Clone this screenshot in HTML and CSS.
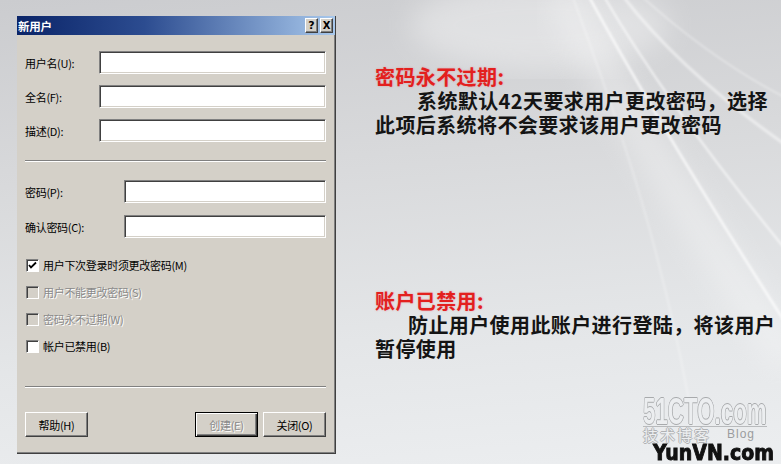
FILE: index.html
```html
<!DOCTYPE html>
<html lang="zh-CN">
<head>
    <meta charset="UTF-8">
    <title>新用户</title>
    <link rel="stylesheet" href="styles.css">
</head>
<body>

<div class="screen">
    <svg class="streaks" width="781" height="464" viewBox="0 0 781 464">
        <defs>
            <filter id="soft"><feGaussianBlur stdDeviation="1.2"/></filter>
            <filter id="wide"><feGaussianBlur stdDeviation="14"/></filter>
        </defs>
        <ellipse cx="540" cy="25" rx="130" ry="45" fill="#fff" opacity="0.35" filter="url(#wide)"/>
        <path d="M560,-5 C620,100 690,220 790,360" stroke="#fff" stroke-width="34" fill="none" opacity="0.3" filter="url(#wide)"/>
        <g fill="none" stroke="#fff" filter="url(#soft)">
            <path d="M588,-5 C640,90 700,190 790,330" stroke-width="2.5" opacity="0.75"/>
            <path d="M603,-5 C650,75 712,160 790,255" stroke-width="2" opacity="0.65"/>
            <path d="M622,-5 C668,55 728,105 790,148" stroke-width="3" opacity="0.5"/>
            <path d="M572,-5 C618,120 668,260 700,464" stroke-width="1.5" opacity="0.35"/>
            <path d="M640,-5 C690,40 740,75 790,100" stroke-width="1.5" opacity="0.4"/>
        </g>
    </svg>

    <div class="dialog">
        <div class="titlebar">
            <span class="title">新用户</span>
            <div class="tb-btns">
                <span class="tb-btn">?</span>
                <span class="tb-btn tb-close">X</span>
            </div>
        </div>

        <div class="dlg-body">
            <div class="fields names">
                <label>用户名(U):</label><span class="field"></span>
                <label>全名(F):</label><span class="field"></span>
                <label>描述(D):</label><span class="field"></span>
            </div>

            <div class="sep"></div>

            <div class="fields pass">
                <label>密码(P):</label><span class="field"></span>
                <label>确认密码(C):</label><span class="field"></span>
            </div>

            <div class="checks">
                <div class="check">
                    <span class="box">
                        <svg width="9" height="9" viewBox="0 0 9 9"><path d="M1,4 L3,6.5 L8,1.5" stroke="#000" stroke-width="1.8" fill="none"/></svg>
                    </span>
                    <span>用户下次登录时须更改密码(M)</span>
                </div>
                <div class="check disabled"><span class="box"></span><span>用户不能更改密码(S)</span></div>
                <div class="check disabled"><span class="box"></span><span>密码永不过期(W)</span></div>
                <div class="check"><span class="box"></span><span>帐户已禁用(B)</span></div>
            </div>

            <div class="sep sep-low"></div>

            <div class="buttons">
                <button class="btn">帮助(H)</button>
                <button class="btn btn-default push" disabled>创建(E)</button>
                <button class="btn">关闭(O)</button>
            </div>
        </div>
    </div>

    <div class="notes">
        <div class="note">
            <div class="note-title">密码永不过期:</div>
            <p class="indent-a">系统默认42天要求用户更改密码，选择<br>此项后系统将不会要求该用户更改密码</p>
        </div>
        <div class="note note-second">
            <div class="note-title">账户已禁用:</div>
            <p class="indent-b">防止用户使用此账户进行登陆，将该用户<br>暂停使用</p>
        </div>
    </div>

    <div class="watermark">
        <div class="wm-site">51CTO.com</div>
        <div class="wm-blog"><span class="wm-cn">技术博客</span><span class="wm-en">Blog</span></div>
        <div class="wm-yun">YunVN.com</div>
    </div>
</div>

</body>
</html>
```

FILE: styles.css
```css
body { margin: 0; font-family: "Noto Sans CJK SC", sans-serif; }
.screen { position: relative; width: 781px; height: 464px; overflow: hidden; display: flex; align-items: flex-start; background: linear-gradient(175deg, #cbcccf 0%, #d8d9db 35%, #e4e6e8 70%, #eceef0 100%); }
.streaks { position: absolute; top: 0; left: 0; }

/* dialog */
.dialog { position: relative; width: 319px; height: 438px; margin: 16px 0 0 17px; background: #d4d0c8; box-sizing: border-box; box-shadow: inset -1px -1px #404040, inset -2px -2px #808080; display: flex; flex-direction: column; }
.titlebar { height: 19px; display: flex; align-items: center; justify-content: space-between; background: linear-gradient(to right, #0a2468, #2c4c90 40%, #a8c8ec); margin-right: 1px; }
.title { color: #fff; font-weight: bold; font-size: 11.5px; letter-spacing: -0.3px; padding-left: 1px; }
.tb-btns { display: flex; gap: 2px; margin-right: 2px; }
.tb-btn { width: 11px; height: 13px; background: #d4d0c8; border: 1px solid; border-color: #fff #404040 #404040 #fff; box-shadow: inset -1px -1px #808080; font: bold 11px/13px "DejaVu Sans", sans-serif; text-align: center; color: #000; }
.tb-close { font-size: 10px; }

.dlg-body { padding: 16px 10px 15px 8px; font-size: 11px; letter-spacing: -0.3px; color: #000; }
.fields { display: grid; row-gap: 11px; align-items: center; }
.names { grid-template-columns: 74px 1fr; }
.pass { grid-template-columns: 99px 1fr; row-gap: 12px; }
.field { display: block; height: 23px; box-sizing: border-box; background: #fff; border: 1px solid; border-color: #808080 #fff #fff #808080; box-shadow: inset 1px 1px #404040, inset -1px -1px #d4d0c8; }

.sep { height: 0; border-top: 1px solid #808080; border-bottom: 1px solid #fff; margin: 18px 0; }
.sep-low { margin: 32px 0 24px; }

.checks { display: flex; flex-direction: column; gap: 11px; margin-top: 19px; }
.check { height: 16px; display: flex; align-items: center; gap: 4px; padding-left: 1px; }
.box { width: 11px; height: 11px; background: #fff; border: 1px solid; border-color: #808080 #fff #fff #808080; box-shadow: inset 1px 1px #404040; display: flex; align-items: center; justify-content: center; }
.disabled { color: #8a8a8a; text-shadow: 1px 1px #fff; }
.disabled .box { background: #d4d0c8; }

.buttons { display: flex; gap: 5px; }
.btn { width: 63px; height: 25px; padding: 0; background: #d4d0c8; border: 1px solid; border-color: #fff #404040 #404040 #fff; box-shadow: inset -1px -1px #808080; font: 11px "Noto Sans CJK SC", sans-serif; letter-spacing: -0.3px; color: #000; }
.push { margin-left: auto; }
.btn-default { border: 1px solid #000; box-shadow: inset 1px 1px #fff, inset -1px -1px #404040, inset -2px -2px #808080; }
.btn:disabled { color: #8a8a8a; text-shadow: 1px 1px #fff; }

/* notes */
.notes { position: relative; margin-left: 39px; padding-top: 65px; font-size: 20px; line-height: 24px; font-weight: bold; letter-spacing: 0.4px; }
.note-title { color: #e3201e; text-shadow: 0 0 2px rgba(230, 40, 40, 0.35); }
.note p { margin: 0; color: #141414; }
.indent-a { text-indent: 42px; }
.indent-b { text-indent: 33px; }
.note-second { margin-top: 152px; }

/* watermark */
.watermark { position: absolute; left: 643px; top: 397px; width: 138px; }
.wm-site { height: 29px; font: bold 36px/29px "Liberation Sans", sans-serif; color: #eceef0; transform: scaleX(0.62); transform-origin: left top; white-space: nowrap; text-shadow: 1px 0 #a8aaac, -1px 0 #a8aaac, 0 1px #a8aaac, 0 -1px #a8aaac; }
.wm-blog { display: flex; align-items: center; gap: 16px; height: 15px; border-top: 1px solid #b8babc; width: 124px; }
.wm-cn { font-size: 15px; line-height: 15px; letter-spacing: 2px; color: #eceef0; text-shadow: 1px 0 #b0b2b4, -1px 0 #b0b2b4, 0 1px #b0b2b4, 0 -1px #b0b2b4; }
.wm-en { font: 12px/15px "Liberation Sans", sans-serif; letter-spacing: 1px; color: #9a9c9e; }
.wm-yun { margin: 1px 0 0 10px; font: bold 22px/19px "DejaVu Sans", sans-serif; color: #111; -webkit-text-stroke: 1px #111; transform: scaleX(0.86); transform-origin: left top; white-space: nowrap; }
```
